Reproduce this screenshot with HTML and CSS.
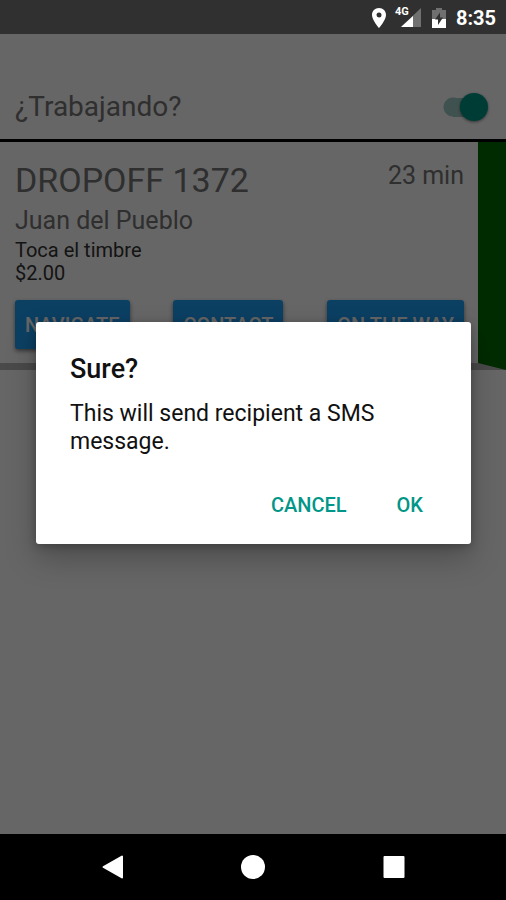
FILE: index.html
```html
<!DOCTYPE html>
<html lang="es">
<head>
<meta charset="utf-8">
<meta name="viewport" content="width=device-width, initial-scale=1">
<title>Dropoff 1372</title>
<link rel="stylesheet" href="styles.css">
</head>
<body>
<div class="screen">
  <header class="status">
    <svg class="status-pin" width="16" height="20" viewBox="0 0 16 20" aria-hidden="true"><path fill="#fff" fill-rule="evenodd" d="M8 0C3.900 0 1 3 1 7c0 5 7 13 7 13s7-8 7-13c0-4-2.900-7-7-7zm0 4.500a2.500 2.500 0 1 1 0 5 2.500 2.500 0 0 1 0-5z"/></svg>
    <span class="signal">
      <svg width="22" height="20" viewBox="0 0 22 20" aria-hidden="true"><path fill="#707070" d="M22 0v19H2z"/><path fill="#fff" d="M14 8v11H2z"/><path fill="#303030" d="M0 0h12v9H0z"/></svg>
      <span class="network">4G</span>
    </span>
    <svg class="status-battery" width="14" height="20" viewBox="0 0 14 20" aria-hidden="true"><path fill="#707070" d="M4 0h6v2h4v9H0V2h4z"/><path fill="#fff" d="M0 11h14v9H0z"/><path fill="#303030" d="M8 4.500v5h3L6 17v-5.500H3z"/></svg>
    <time class="clock">8:35</time>
  </header>

  <main class="content">
    <div class="toolbar">
      <label for="working">¿Trabajando?</label>
      <input class="switch" id="working" type="checkbox" role="switch" checked>
    </div>
    <article class="job">
      <div class="job-body">
        <div class="job-head">
          <h1>DROPOFF 1372</h1>
          <span class="eta">23 min</span>
        </div>
        <p class="name">Juan del Pueblo</p>
        <p class="note">Toca el timbre</p>
        <p class="note">$2.00</p>
        <div class="actions">
          <button type="button">NAVIGATE</button>
          <button type="button">CONTACT</button>
          <button type="button">ON THE WAY</button>
        </div>
      </div>
      <div class="stripe"></div>
    </article>

    <div class="scrim">
      <section class="dialog" role="dialog" aria-modal="true" aria-labelledby="dialog-title">
        <h2 id="dialog-title">Sure?</h2>
        <p>This will send recipient a SMS message.</p>
        <div class="dialog-actions">
          <button type="button">CANCEL</button>
          <button type="button">OK</button>
        </div>
      </section>
    </div>
  </main>

  <nav class="navbar">
    <button type="button" aria-label="Back"><svg width="24" height="24" viewBox="0 0 24 24"><path fill="#fff" stroke="#fff" stroke-width="2" stroke-linejoin="round" d="M22 1.500v21L3.500 12z"/></svg></button>
    <button type="button" aria-label="Home"><svg width="24" height="24" viewBox="0 0 24 24"><circle fill="#fff" cx="12" cy="12" r="12"/></svg></button>
    <button type="button" aria-label="Recents"><svg width="24" height="24" viewBox="0 0 24 24"><rect fill="#fff" x="1.500" y="1" width="21" height="22" rx="1"/></svg></button>
  </nav>
</div>
</body>
</html>
```
FILE: styles.css
```css
* {
  box-sizing: border-box;
}

body {
  margin: 0;
  font-family: Roboto, "Liberation Sans", sans-serif;
}

h1, h2, p {
  margin: 0;
  font-weight: 400;
}

button {
  font-family: inherit;
  border: 0;
  cursor: pointer;
}

.screen {
  display: flex;
  flex-direction: column;
  min-height: 100vh;
}

.status {
  display: flex;
  align-items: center;
  justify-content: flex-end;
  height: 34px;
  padding: 2px 10px 0 0;
  background: #303030;
  color: #fff;
}

.status-pin {
  margin-right: 12px;
}

.signal {
  position: relative;
  display: flex;
  margin-right: 11px;
}

.network {
  position: absolute;
  left: -4px;
  top: -2px;
  font-size: 11px;
  line-height: 12px;
  font-weight: 700;
}

.status-battery {
  margin-right: 10px;
}

.clock {
  font-size: 20px;
  font-weight: 700;
}

.content {
  position: relative;
  flex: 1;
  background: #fff;
}

.toolbar {
  display: flex;
  align-items: center;
  justify-content: space-between;
  padding: 57px 18px 16px 15px;
  border-bottom: 3px solid #000;
  color: #757575;
  font-size: 28px;
  line-height: 32px;
}

.switch {
  appearance: none;
  display: flex;
  align-items: center;
  justify-content: flex-end;
  width: 45px;
  height: 28px;
  margin: 0;
  border-radius: 14px;
  background:
    radial-gradient(circle at 10px 14px, #a0ccc6 9px, transparent 10px),
    linear-gradient(#a0ccc6, #a0ccc6) 10px center / 20px 19px no-repeat;
}

.switch::before {
  content: "";
  width: 28px;
  height: 28px;
  border-radius: 50%;
  background: #009688;
  box-shadow: 0 1px 3px rgba(0, 0, 0, 0.5);
}

.job {
  display: flex;
  background: linear-gradient(#b8b8b8, #b8b8b8) bottom / 100% 7px no-repeat;
}

.job-body {
  flex: 1;
  padding: 16px 14px 21px 15px;
}

.stripe {
  width: 28px;
  background: #006c00;
  clip-path: polygon(0 0, 100% 0, 100% 100%, 0 calc(100% - 7px));
}

.job-head {
  display: flex;
  justify-content: space-between;
  color: #757575;
}

h1 {
  font-size: 34px;
  line-height: 45px;
}

.eta {
  font-size: 25px;
  line-height: 35px;
}

.name {
  color: #757575;
  font-size: 25px;
  line-height: 35px;
}

.note {
  color: #333;
  font-size: 20px;
  line-height: 23px;
}

.name + .note {
  margin-top: 1px;
}

.actions {
  display: flex;
  justify-content: space-between;
  margin-top: 15px;
}

.actions button {
  height: 49px;
  padding: 0 10px;
  border-radius: 3px;
  background: #20a0f8;
  color: #fff;
  font-size: 20px;
  font-weight: 500;
  box-shadow: 0 2px 4px rgba(0, 0, 0, 0.5);
}

.scrim {
  position: absolute;
  inset: 0;
  display: flex;
  align-items: center;
  padding: 0 35px 2px 36px;
  background: rgba(0, 0, 0, 0.6);
}

.dialog {
  flex: 1;
  padding: 30px 34px 18px;
  border-radius: 3px;
  background: #fff;
  color: #111;
  box-shadow: 0 14px 30px rgba(0, 0, 0, 0.25), 0 2px 8px rgba(0, 0, 0, 0.25);
}

.dialog h2 {
  font-size: 27px;
  line-height: 34px;
  font-weight: 500;
}

.dialog p {
  margin-top: 14px;
  font-size: 23px;
  line-height: 28px;
}

.dialog-actions {
  display: flex;
  justify-content: flex-end;
  gap: 22px;
  margin-top: 28px;
}

.dialog-actions button {
  height: 42px;
  padding: 0 14px;
  background: none;
  color: #009688;
  font-size: 20px;
  font-weight: 500;
}

.navbar {
  display: flex;
  justify-content: space-between;
  align-items: center;
  height: 66px;
  padding: 0 100px;
  background: #000;
}

.navbar button {
  display: flex;
  padding: 0;
  background: none;
}
```
